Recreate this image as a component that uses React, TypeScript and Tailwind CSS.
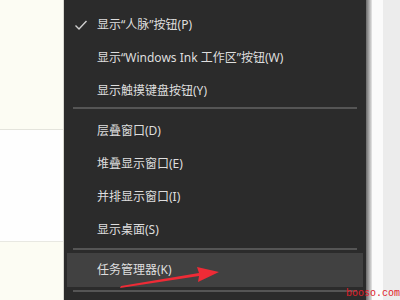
import React from "react";

const font = { fontFamily: '"Noto Sans", "Noto Sans CJK SC", sans-serif' };

function Row({ text, check, h = "h-[33px]", highlight }: { text: string; check?: boolean; h?: string; highlight?: boolean }) {
  return (
    <div className={`${h} flex items-center relative ${highlight ? "mx-[3px] bg-[#414141]" : ""}`}>
      {check && (
        <svg className={`absolute ${highlight ? "left-[7px]" : "left-[10px]"} top-1/2 -translate-y-1/2`} width="14" height="12" viewBox="0 0 14 12">
          <polyline points="1.5,6.5 5,10 12.5,2" fill="none" stroke="#cfcfcf" strokeWidth="1.4" />
        </svg>
      )}
      <span className={`${highlight ? "pl-[30px]" : "pl-[33px]"} text-[12px] text-[#dedede] whitespace-nowrap`}>{text}</span>
    </div>
  );
}

function Sep({ mt, mb }: { mt: string; mb: string }) {
  return <div className={`${mt} ${mb} mx-[9px] h-[2px] bg-[#555555]`} />;
}

export default function App() {
  return (
    <div className="w-[400px] h-[300px] flex overflow-hidden relative" style={font}>
      {/* left background */}
      <div className="w-[64px] h-full flex flex-col border-r border-[#d8d8d0]">
        <div className="h-[130px] bg-[#fcfcf3] border-b border-[#e4e4dc]" />
        <div className="h-[112px] bg-[#fefefe] border-b border-[#e8e8e2]" />
        <div className="flex-1 bg-[#fcfcf3]" />
      </div>
      {/* menu */}
      <div className="w-[302px] h-full bg-[#2b2b2b] flex flex-col pt-[8px]">
        <Row text="显示“人脉”按钮(P)" check />
        <Row text="显示“Windows Ink 工作区”按钮(W)" />
        <Row text="显示触摸键盘按钮(Y)" />
        <Sep mt="mt-[0px]" mb="mb-[5px]" />
        <Row text="层叠窗口(D)" />
        <Row text="堆叠显示窗口(E)" />
        <Row text="并排显示窗口(I)" />
        <Row text="显示桌面(S)" />
        <Sep mt="mt-[2px]" mb="mb-[3px]" />
        <Row text="任务管理器(K)" h="h-[34px]" highlight />
        <Sep mt="mt-[3px]" mb="mb-[3px]" />
      </div>
      {/* right strips */}
      <div className="w-[6px] h-full bg-gradient-to-r from-[#6a6a6a] to-[#e8e8e8]" />
      <div className="w-[11px] h-full bg-[#fbfbfb]" />
      <div className="flex-1 h-full bg-[#ececec]" />

      {/* red arrow */}
      <svg className="absolute left-0 top-0 pointer-events-none" width="400" height="300">
        <polygon points="120,288 199,276 198,282 219,272 197,267 199,273 121,286" fill="#ee2b36" />
      </svg>

      {/* watermark */}
      <div
        className="absolute right-0 bottom-0 text-[10px] leading-[12px] text-[#e0202a]"
        style={{ fontFamily: '"Liberation Mono", monospace' }}
      >
        booso.com
      </div>
    </div>
  );
}
